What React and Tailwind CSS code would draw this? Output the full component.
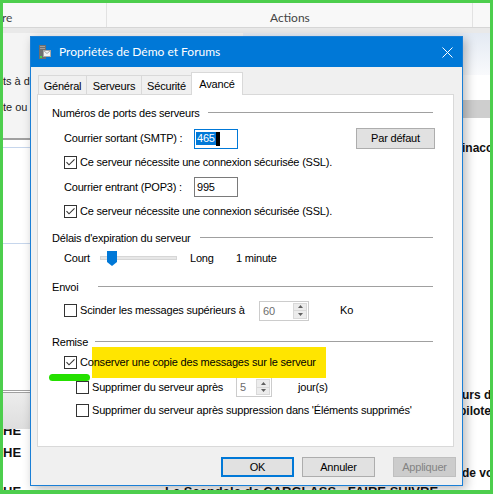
import React from "react";

function Check({ checked }) {
  return (
    <span className="w-[13px] h-[13px] shrink-0 border border-[#333333] bg-white flex items-center justify-center">
      {checked && (
        <svg width="11" height="11" viewBox="0 0 11 11">
          <path d="M1.5 5.2 L4 7.8 L9.5 2.3" fill="none" stroke="#333333" strokeWidth="1.1" />
        </svg>
      )}
    </span>
  );
}

function Spin({ w, value }) {
  return (
    <div className={`${w} h-[20px] shrink-0 border border-[#cccccc] bg-white flex`}>
      <span className="flex-1 pl-[3px] leading-[18px] text-[#6d6d6d]">{value}</span>
      <div className="w-[16px] flex flex-col p-px">
        <div className="flex-1 bg-[#ececec] border border-[#d9d9d9] flex items-center justify-center">
          <svg width="5" height="3" viewBox="0 0 5 3">
            <path d="M0 3 L2.5 0 L5 3 Z" fill="#606060" />
          </svg>
        </div>
        <div className="flex-1 bg-[#ececec] border border-[#d9d9d9] border-t-0 flex items-center justify-center">
          <svg width="5" height="3" viewBox="0 0 5 3">
            <path d="M0 0 L5 0 L2.5 3 Z" fill="#606060" />
          </svg>
        </div>
      </div>
    </div>
  );
}

function GroupLabel({ text, w, mt }) {
  return (
    <div className={`${mt} h-[14px] flex items-center`}>
      <span className={`${w} shrink-0 leading-[14px] whitespace-nowrap`}>{text}</span>
      <div className="flex-1 h-px bg-[#a0a0a0] mb-[1px]" />
    </div>
  );
}

function Background() {
  return (
    <div className="flex flex-col h-full">
      {/* header */}
      <div className="flex h-[25px] shrink-0 bg-[#f8f8f8] border-b border-[#d6d6d6] text-[12px] text-[#444444] font-['Lato',sans-serif]">
        <div className="w-[104px] border-r border-[#e2e2e2] flex items-center pt-[5px]">
          <span className="-ml-[1px]">re</span>
        </div>
        <div className="w-[366px] border-r border-[#e2e2e2] flex items-center pt-[5px] pl-[163px]">Actions</div>
        <div className="flex-1" />
      </div>
      <div className="h-[5px] shrink-0 bg-[#e9e9e9]" />

      <div className="flex flex-1 min-h-0">
        {/* left pane */}
        <div className="w-[240px] shrink-0 flex flex-col text-[11px] text-[#222222]">
          <div className="h-[105px] shrink-0 bg-[#f4f4f4] pt-[41px]">
            <div className="h-[14px] leading-[14px] whitespace-nowrap">ts à d</div>
            <div className="mt-[12px] h-[14px] leading-[14px] whitespace-nowrap">te ou</div>
          </div>
          <div className="h-[2px] shrink-0 bg-[#a0a0a0]" />
          <div className="h-[7px] shrink-0" />
          <div className="h-px shrink-0 bg-[#c6d6ec]" />
          <div className="h-[95px] shrink-0" />
          <div className="h-px shrink-0 bg-[#c6d6ec]" />
          <div className="h-[146px] shrink-0" />
          <div className="h-[3px] shrink-0 border-y border-[#a0a0a0]" />
          <div className="h-[36px] shrink-0 bg-linear-to-b from-[#ececec] to-[#dedede]" />
          <div className="h-[9px] shrink-0 overflow-hidden font-bold text-[13px] text-[#111111]">
            <div className="-mt-[6px] leading-[15px]">HE</div>
          </div>
          <div className="mt-[7px] h-[15px] shrink-0 leading-[15px] font-bold text-[13px] text-[#111111]">HE</div>
          <div className="mt-[24px] h-[15px] shrink-0 leading-[15px] font-bold text-[13px] text-[#111111] flex whitespace-nowrap">
            <span className="w-[162px] shrink-0">HE</span>
            <span>Le Scandale de CARGLASS - FAIRE SUIVRE</span>
          </div>
        </div>

        {/* right pane */}
        <div className="flex-1 min-w-0 overflow-hidden flex flex-col font-bold text-[12px] text-[#111111]">
          <div className="h-[42px] shrink-0 bg-linear-to-b from-[#e4eaf3] to-[#f9fafc]" />
          <div className="h-[25px] shrink-0" />
          <div className="h-[18px] shrink-0 bg-[#cecece]" />
          <div className="mt-[23px] h-[14px] shrink-0 leading-[14px] pl-[219px] whitespace-nowrap">inaccessible</div>
          <div className="mt-[233px] h-[14px] shrink-0 leading-[14px] pl-[219px] whitespace-nowrap">urs du</div>
          <div className="mt-[2px] h-[14px] shrink-0 leading-[14px] pl-[216px] whitespace-nowrap">pilote</div>
          <div className="mt-[48px] h-[14px] shrink-0 leading-[14px] pl-[219px] whitespace-nowrap">de vos</div>
        </div>
      </div>
    </div>
  );
}

function Dialog() {
  const tabs = [
    { label: "Général", w: "w-[49px]" },
    { label: "Serveurs", w: "w-[56px]" },
    { label: "Sécurité", w: "w-[51px]" },
  ];

  return (
    <div className="absolute left-[27px] top-[33px] w-[433px] h-[450px] border border-[#1a7fd6] bg-[#f0f0f0] shadow-[3px_3px_10px_rgba(0,0,0,0.28)] flex flex-col text-[11px] tracking-[-0.2px]">
      {/* title bar */}
      <div className="h-[30px] shrink-0 bg-[#0078d7] flex items-center pl-[8px] pr-[9px]">
        <svg width="12" height="14" viewBox="0 0 12 14">
          <rect x="0" y="0" width="7" height="14" fill="#6f6f6f" />
          <rect x="1" y="1" width="5" height="1" fill="#a0a0a0" />
          <rect x="1" y="3" width="5" height="1" fill="#a0a0a0" />
          <rect x="1" y="11" width="2" height="2" fill="#4ad04a" />
          <rect x="4.5" y="5.5" width="7" height="6" fill="#f4f4f4" stroke="#a8a8a8" />
          <path d="M4.5 5.5 L8 8.5 L11.5 5.5" fill="none" stroke="#a8a8a8" />
        </svg>
        <span className="ml-[8px] text-white text-[12px] tracking-normal font-['Lato',sans-serif]">
          Propriétés de Démo et Forums
        </span>
        <svg className="ml-auto" width="11" height="11" viewBox="0 0 11 11">
          <path d="M0.5 0.5 L10.5 10.5 M10.5 0.5 L0.5 10.5" stroke="#ffffff" strokeWidth="1" />
        </svg>
      </div>

      {/* body */}
      <div className="flex-1 flex flex-col px-[6px] pt-[5px]">
        {/* tabs */}
        <div className="flex items-end h-[22px] pl-px">
          {tabs.map((t, i) => (
            <div
              key={t.label}
              className={`${t.w} ${i > 0 ? "-ml-px" : ""} h-[19px] pt-[2px] border border-b-0 border-[#d9d9d9] bg-[#f0f0f0] flex items-center justify-center whitespace-nowrap`}
            >
              {t.label}
            </div>
          ))}
          <div className="relative top-[1px] z-10 -ml-px w-[52px] h-[23px] border border-b-0 border-[#d9d9d9] bg-white flex items-center justify-center">
            Avancé
          </div>
        </div>

        {/* panel */}
        <div className="relative w-[417px] h-[353px] border border-[#d9d9d9] bg-white flex flex-col pl-[14px] pr-[20px]">
          <div className="absolute left-[54px] top-[252px] w-[234px] h-[31px] bg-[#ffe500]" />

          <GroupLabel text="Numéros de ports des serveurs" w="w-[156px]" mt="mt-[11px]" />

          <div className="ml-[12px] mt-[8px] h-[21px] flex items-center">
            <span className="w-[130px] shrink-0 whitespace-nowrap">Courrier sortant (SMTP) :</span>
            <div className="w-[44px] h-[20px] shrink-0 border border-[#0078d7] flex items-center pl-px">
              <span className="bg-[#0078d7] text-white leading-[13px] px-px">465</span>
              <span className="w-[4px] h-[14px] bg-black" />
            </div>
            <button className="ml-auto -mr-[2px] w-[79px] h-[21px] border border-[#adadad] bg-[#e1e1e1] text-[11px]">
              Par défaut
            </button>
          </div>

          <div className="ml-[12px] mt-[6px] h-[14px] flex items-center gap-[3px] whitespace-nowrap">
            <Check checked />
            <span>Ce serveur nécessite une connexion sécurisée (SSL).</span>
          </div>

          <div className="ml-[12px] mt-[8px] h-[20px] flex items-center">
            <span className="w-[130px] shrink-0 whitespace-nowrap">Courrier entrant (POP3) :</span>
            <div className="w-[44px] h-[20px] shrink-0 border border-[#7a7a7a] flex items-center pl-[2px]">995</div>
          </div>

          <div className="ml-[12px] mt-[7px] h-[14px] flex items-center gap-[3px] whitespace-nowrap">
            <Check checked />
            <span>Ce serveur nécessite une connexion sécurisée (SSL).</span>
          </div>

          <GroupLabel text="Délais d'expiration du serveur" w="w-[148px]" mt="mt-[13px]" />

          <div className="ml-[12px] mt-[5px] h-[16px] flex items-center whitespace-nowrap">
            <span className="w-[36px] shrink-0">Court</span>
            <div className="relative w-[77px] h-[16px] shrink-0">
              <div className="absolute left-0 right-0 top-[6px] h-[4px] bg-[#e7e7e7] border border-[#d6d6d6]" />
              <svg className="absolute left-[7px] top-[1px]" width="10" height="15" viewBox="0 0 10 15">
                <path d="M0 0 H10 V11 L5 15 L0 11 Z" fill="#0078d7" />
              </svg>
            </div>
            <span className="ml-[13px] w-[46px] shrink-0">Long</span>
            <span>1 minute</span>
          </div>

          <GroupLabel text="Envoi" w="w-[46px]" mt="mt-[14px]" />

          <div className="ml-[12px] mt-[6px] h-[21px] flex items-center whitespace-nowrap">
            <Check />
            <span className="ml-[3px] w-[179px] shrink-0">Scinder les messages supérieurs à</span>
            <Spin w="w-[50px]" value="60" />
            <span className="ml-[31px]">Ko</span>
          </div>

          <GroupLabel text="Remise" w="w-[43px]" mt="mt-[14px]" />

          <div className="relative ml-[12px] mt-[6px] h-[14px] flex items-center gap-[3px] whitespace-nowrap">
            <Check checked />
            <span>Conserver une copie des messages sur le serveur</span>
          </div>

          <div className="ml-[24px] mt-[8px] h-[20px] flex items-center whitespace-nowrap">
            <Check />
            <span className="ml-[3px] w-[144px] shrink-0">Supprimer du serveur après</span>
            <Spin w="w-[36px]" value="5" />
            <span className="ml-[26px]">jour(s)</span>
          </div>

          <div className="ml-[24px] mt-[6px] h-[14px] flex items-center gap-[3px] whitespace-nowrap">
            <Check />
            <span>Supprimer du serveur après suppression dans 'Éléments supprimés'</span>
          </div>

          <div className="absolute left-[11px] top-[279px] w-[41px] h-[7px] rounded-full bg-[#25e000]" />
        </div>

        {/* buttons */}
        <div className="flex justify-end mt-[10px]">
          <button className="w-[73px] h-[20px] border-2 border-[#0078d7] bg-[#e1e1e1] text-[11px]">OK</button>
          <button className="ml-[8px] w-[73px] h-[20px] border border-[#adadad] bg-[#e1e1e1] text-[11px]">Annuler</button>
          <button className="ml-[18px] w-[63px] h-[20px] border border-[#bfbfbf] bg-[#cccccc] text-[#838383] text-[11px]">
            Appliquer
          </button>
        </div>
      </div>
    </div>
  );
}

export default function App() {
  return (
    <div className="relative w-[493px] h-[494px] overflow-hidden border-[3px] border-b-4 border-[#4dce4d] bg-white font-['Liberation_Sans',Arial,sans-serif] text-black">
      <Background />
      <Dialog />
    </div>
  );
}
